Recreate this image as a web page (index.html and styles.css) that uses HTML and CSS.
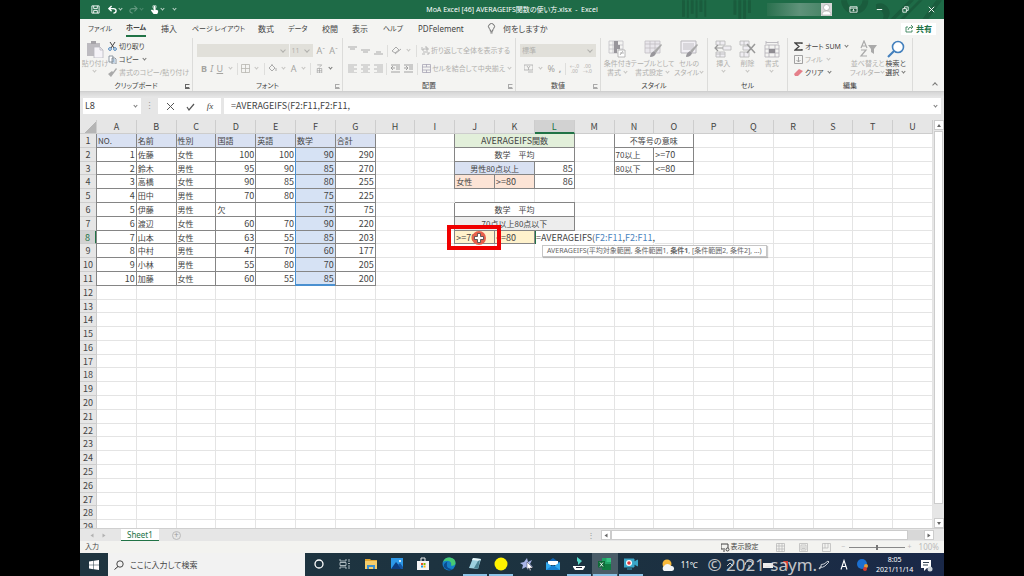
FILE: index.html
```
<!DOCTYPE html>
<html lang="ja">
<head>
    <meta charset="utf-8">
    <title>AVERAGEIFS関数の使い方.xlsx - Excel</title>
    <link rel="stylesheet" href="styles.css">
</head>
<body>
    <div class="window">
        <!-- title bar -->
        <header class="titlebar">
            <svg class="pattern" viewBox="0 0 270 19"><g fill="#1a5c3d"><path d="M0 0h3v17H0zM5 0h2v18H5zM9 0h3v14H9zM14 0h2v18h-2zM18 0h3v12h-3zM23 0h2v17h-2zM53 0h3v15h-3zM58 0h3v19h-3zM63 0h3v19h-3zM68 0h3v13h-3zM215 19l19-19h5l-19 19zM225 19l19-19h4l-19 19zM248 19l14-19h6l-14 19z"/><path d="M164 0a14 14 0 0 0 28 0h-6a8 8 0 0 1-16 0zM200 4a10 10 0 0 1 12 15h-5a7 7 0 0 0-7-10z"/></g></svg>
            <div class="quick">
                <button aria-label="上書き保存"><svg viewBox="0 0 10 10"><path d="M1 1h8v8H1zM3 1v3h4V1M3 9V6h4v3" fill="none" stroke="#fff"/></svg></button>
                <button aria-label="元に戻す"><svg viewBox="0 0 10 10"><path d="M4 1L1 4l3 3M1 4h5q3 0 3 2.500T6 9" fill="none" stroke="#fff" stroke-width="1.500"/></svg><i class="chev"></i></button>
                <button class="dim" aria-label="やり直し"><svg viewBox="0 0 10 10"><path d="M6 1l3 3-3 3M9 4H4Q1 4 1 6.500T4 9" fill="none" stroke="#fff" stroke-width="1.200"/></svg><i class="chev"></i></button>
                <button aria-label="タッチ"><svg viewBox="0 0 10 10"><path d="M4 1q1-1 2 0v4l3 1v2L8 10H4L1 6l1-1 2 1z" fill="#fff"/><circle cx="5" cy="2" r="2" fill="none" stroke="#fff" stroke-width=".6"/></svg><i class="chev"></i></button>
                <button aria-label="カスタマイズ"><i class="chev"></i></button>
            </div>
            <h1>MoA Excel [46] AVERAGEIFS関数の使い方.xlsx&nbsp; -&nbsp; Excel</h1>
            <div class="winbtns">
                <span class="account"></span>
                <svg class="avatar" viewBox="0 0 11 13"><path fill="#d8d8d8" d="M0 0h11v13H0z"/><circle cx="5.500" cy="4.500" r="3" fill="#fff" stroke="#999" stroke-width=".6"/><path d="M1 12q0-4 4.500-4t4.500 4z" fill="#fff" stroke="#999" stroke-width=".5"/></svg>
                <button aria-label="リボンの表示"><svg viewBox="0 0 10 10"><path d="M1 2h8v6H1zM1 3.500h8M5 7V5M4 6l1-1 1 1" fill="none" stroke="#fff" stroke-width=".9"/></svg></button>
                <button aria-label="最小化"><svg viewBox="0 0 10 10"><path d="M2 5h6" stroke="#fff"/></svg></button>
                <button aria-label="元のサイズ"><svg viewBox="0 0 10 10"><path d="M2 4h4v4H2zM4 4V2h4v4H6" fill="none" stroke="#fff" stroke-width=".9"/></svg></button>
                <button aria-label="閉じる"><svg viewBox="0 0 10 10"><path d="M2 2l6 6M8 2L2 8" stroke="#fff"/></svg></button>
            </div>
        </header>

        <!-- ribbon tabs -->
        <nav class="tabs">
            <button class="kana">ファイル</button>
            <button class="kana active">ホーム</button>
            <button>挿入</button>
            <button class="kana">ページ レイアウト</button>
            <button>数式</button>
            <button class="kana">データ</button>
            <button>校閲</button>
            <button>表示</button>
            <button class="kana">ヘルプ</button>
            <button>PDFelement</button>
            <button class="tell"><svg viewBox="0 0 8 10"><path d="M3 7.500Q3 6 2 5a2.700 2.700 0 1 1 4 0Q5 6 5 7.500zM3 9h2" fill="none" stroke="#555" stroke-width=".8"/></svg>何をしますか</button>
            <button class="share"><svg viewBox="0 0 9 9"><path d="M3 3H1v5h6V6M3 6q0-3 4-3M6 1l2 2-2 2" fill="none" stroke="#217346" stroke-width=".8"/></svg>共有</button>
        </nav>

        <!-- ribbon -->
        <div class="ribbon">
            <section class="group">
                <div class="tools clipboard">
                    <button class="big off"><svg viewBox="0 0 18 18"><path d="M1 3h13v13H1z" fill="#bdbbc0"/><path d="M5 1h5v3H5z" fill="#a5a3a8"/><path d="M8 7h6l3 3v8H8z" fill="#f5f3f8" stroke="#b9b7bf" stroke-width=".8"/><path d="M14 7v3h3" fill="none" stroke="#b9b7bf" stroke-width=".8"/></svg><span>貼り付け</span><i class="chev"></i></button>
                    <div class="stack">
                        <button><svg viewBox="0 0 9 9"><path d="M2 0l4 6M7 0L3 6" stroke="#444"/><circle cx="2" cy="7" r="1.400" fill="none" stroke="#4d86bd"/><circle cx="7" cy="7" r="1.400" fill="none" stroke="#4d86bd"/></svg>切り取り</button>
                        <button><svg viewBox="0 0 9 9"><path d="M1 1h4v6H1zM4 3h3l1 1v5H4z" fill="#fff" stroke="#74808e" stroke-width=".8"/><path d="M5 5h2M5 7h2" stroke="#4d86bd" stroke-width=".7"/></svg>コピー <i class="chev"></i></button>
                        <button class="off"><svg viewBox="0 0 9 9"><path d="M0 6l4-3 2 2-3 4zM5 4l3-4 1 1-3 4z" fill="#aaa"/></svg>書式のコピー/貼り付け</button>
                    </div>
                </div>
                <h2>クリップボード</h2><i class="launch dark"></i>
            </section>

            <section class="group">
                <div class="rows">
                    <div class="line fonts">
                        <label class="pick"><select aria-label="フォント" disabled><option></option></select></label>
                        <label class="pick size"><select aria-label="サイズ" disabled><option>11</option></select></label>
                        <button class="letter">A<sup>ˆ</sup></button><button class="letter">A<sup>ˇ</sup></button>
                    </div>
                    <div class="line spread">
                        <button class="letter"><b>B</b></button><button class="letter"><em>I</em></button><button class="letter"><u>U</u></button><i class="chev"></i>
                        <i class="bar"></i>
                        <button aria-label="罫線"><svg viewBox="0 0 9 9"><path d="M.5.5h8v8h-8zM4.500 0v9M0 4.500h9" fill="none" stroke="#b8b6b0" stroke-width=".8"/></svg></button><i class="chev"></i>
                        <i class="bar"></i>
                        <button aria-label="塗りつぶし"><svg viewBox="0 0 9 9"><path d="M1 4l3-3 3 3-3 3zM4 1V0M8 4v3" fill="none" stroke="#aaa"/></svg></button><i class="chev"></i>
                        <button class="letter">A</button><i class="chev"></i>
                        <i class="bar"></i>
                        <button aria-label="ふりがな"><svg viewBox="0 0 9 10"><path d="M2 1h5L4 4M2 5h5v5H2zM2 7.500h5M4.500 5v5" fill="none" stroke="#999" stroke-width=".7"/></svg></button><i class="chev dark"></i>
                    </div>
                </div>
                <h2>フォント</h2><i class="launch"></i>
            </section>

            <section class="group">
                <div class="rows">
                    <div class="line align">
                        <button aria-label="上揃え"><svg viewBox="0 0 9 9"><path d="M0 1h9M2 3h5" stroke="#aaa"/></svg></button>
                        <button aria-label="上下中央"><svg viewBox="0 0 9 9"><path d="M0 4h9M2 6h5" stroke="#aaa"/></svg></button>
                        <button aria-label="下揃え"><svg viewBox="0 0 9 9"><path d="M2 6h5M0 8h9" stroke="#aaa"/></svg></button>
                        <i class="bar"></i>
                        <button aria-label="方向"><svg viewBox="0 0 9 9"><path d="M0 5l4-4 3 3-4 3zM3 8l6-5" fill="none" stroke="#aaa"/></svg></button><i class="chev"></i>
                        <i class="bar"></i>
                        <button class="off"><svg viewBox="0 0 9 9"><path d="M1 1v3h2V2M5 0v4h2V2H5M2 6h5M1 8h3M6 8h2V6" fill="none" stroke="#aaa" stroke-width=".8"/></svg>折り返して全体を表示する</button>
                    </div>
                    <div class="line align">
                        <button aria-label="左揃え"><svg viewBox="0 0 9 9"><path d="M0 1h9M0 3h6M0 5h9M0 7h6M0 9h9" stroke="#aaa" stroke-width=".8"/></svg></button>
                        <button aria-label="中央揃え"><svg viewBox="0 0 9 9"><path d="M0 1h9M2 3h5M0 5h9M2 7h5M0 9h9" stroke="#aaa" stroke-width=".8"/></svg></button>
                        <button aria-label="右揃え"><svg viewBox="0 0 9 9"><path d="M0 1h9M3 3h6M0 5h9M3 7h6M0 9h9" stroke="#aaa" stroke-width=".8"/></svg></button>
                        <i class="bar"></i>
                        <button aria-label="インデントを減らす"><svg viewBox="0 0 9 9"><path d="M0 1h9M5 3h4M5 5h4M0 8h9M4 4H0M2 2L0 4l2 2" fill="none" stroke="#999" stroke-width=".9"/></svg></button>
                        <button aria-label="インデントを増やす"><svg viewBox="0 0 9 9"><path d="M0 1h9M5 3h4M5 5h4M0 8h9M0 4h4M2 2l2 2-2 2" fill="none" stroke="#999" stroke-width=".9"/></svg></button>
                        <i class="bar"></i>
                        <button class="off"><svg viewBox="0 0 9 9"><path d="M.5.5h8v8h-8zM0 3h9M0 6h9M4.500 0v3M4.500 6v3" fill="none" stroke="#a9a7b6" stroke-width=".8"/></svg>セルを結合して中央揃え <i class="chev"></i></button>
                    </div>
                </div>
                <h2>配置</h2><i class="launch"></i>
            </section>

            <section class="group">
                <div class="rows">
                    <div class="line">
                        <label class="pick"><select aria-label="表示形式" disabled><option>標準</option></select></label>
                    </div>
                    <div class="line spread">
                        <button aria-label="通貨"><svg viewBox="0 0 9 9"><path d="M0 1h9v5H0zM3 2l1.500 2L6 2M4.500 4v2M4 8h5" fill="none" stroke="#aaa" stroke-width=".8"/></svg></button><i class="chev"></i>
                        <button class="letter">%</button><button class="letter"><b>,</b></button>
                        <i class="bar"></i>
                        <button class="dec">←.0<br>.00</button><button class="dec">.00<br>→.0</button>
                    </div>
                </div>
                <h2>数値</h2><i class="launch"></i>
            </section>

            <section class="group">
                <div class="tools spaced off">
                    <button class="big"><svg viewBox="0 0 18 18"><path d="M1 1h14v12H1zM1 5h14M1 9h14M5 1v12" fill="none" stroke="#c3c1c6" stroke-width=".8"/><path d="M6 1h4v4H6zM6 5h6v4H6zM6 9h3v4H6z" fill="#98969b"/><path d="M10 10h7v7h-7z" fill="#fff" stroke="#aaa" stroke-width=".8"/><path d="M12 15l3-4M12 13h4" stroke="#999" stroke-width=".7"/></svg><span>条件付き<br>書式 <i class="chev"></i></span></button>
                    <button class="big"><svg viewBox="0 0 18 18"><path d="M1 1h15v12H1zM1 4h15M1 8h15M6 1v12M11 1v12" fill="#e9e7ec" stroke="#c0bec3" stroke-width=".8"/><path d="M17 4l1 1-6 8-2-2z" fill="#aaa"/><path d="M6 17q0-4 4-6l2 2q-1 4-6 4z" fill="#98969b"/></svg><span>テーブルとして<br>書式設定 <i class="chev"></i></span></button>
                    <button class="big"><svg viewBox="0 0 18 18"><path d="M1 1h15v12H1z" fill="#f2f0f5" stroke="#b9b7bc"/><path d="M3 3h11v7H3z" fill="#d9d7dc"/><path d="M17 4l1 1-6 8-2-2z" fill="#aaa"/><path d="M6 17q0-4 4-6l2 2q-1 4-6 4z" fill="#98969b"/></svg><span>セルの<br>スタイル<i class="chev"></i></span></button>
                </div>
                <h2>スタイル</h2>
            </section>

            <section class="group">
                <div class="tools thirds off">
                    <button class="big"><svg viewBox="0 0 18 18"><path d="M2 1h9v4H2zM2 12h9v5H2zM6 1v4M6 12v5M2 14h9M9 6h8v4H9z" fill="#efedf2" stroke="#bbb" stroke-width=".9"/><path d="M9 8H1M4 5L1 8l3 3" fill="none" stroke="#999" stroke-width="1.200"/></svg><span>挿入</span><i class="chev"></i></button>
                    <button class="big"><svg viewBox="0 0 18 18"><path d="M2 1h9v4H2zM2 12h9v5H2zM6 1v4M6 12v5M5 6h7v4H5z" fill="#efedf2" stroke="#bbb" stroke-width=".9"/><path d="M9 4l8 9M17 4l-8 9" stroke="#999" stroke-width="1.500"/></svg><span>削除</span><i class="chev"></i></button>
                    <button class="big"><svg viewBox="0 0 18 18"><path d="M2 5h14v12H2zM2 9h14M2 13h14M6 5v12M12 5v12M3 1v3M15 1v3M3 2.500h12" fill="none" stroke="#b8b6bb" stroke-width=".9"/><path d="M6 9h6v4H6z" fill="#8f8d92"/></svg><span>書式</span><i class="chev"></i></button>
                </div>
                <h2>セル</h2>
            </section>

            <section class="group">
                <div class="tools spaced edit">
                    <div class="stack">
                        <button><svg viewBox="0 0 9 9"><path d="M8 2V1H1l4 3.500L1 8h7V7" fill="none" stroke="#444" stroke-width="1.300"/></svg>オート SUM <i class="chev"></i></button>
                        <button class="off"><svg viewBox="0 0 9 9"><path d="M.5.5h8v8h-8zM4.500 2v5M2.500 5l2 2 2-2" fill="none" stroke="#999" stroke-width=".9"/></svg>フィル <i class="chev"></i></button>
                        <button><svg viewBox="0 0 9 9"><path d="M0 6l5-5 4 2-5 5H1z" fill="#e5808a"/></svg>クリア <i class="chev"></i></button>
                    </div>
                    <button class="big off"><svg viewBox="0 0 18 18"><path d="M2 8l3-7 3 7M3 6h4M2 10h5l-5 6h6" fill="none" stroke="#aaa" stroke-width="1.200"/><path d="M9 5h9l-3 4v5l-3-2V9z" fill="#aaa"/></svg><span>並べ替えと<br>フィルター<i class="chev"></i></span></button>
                    <button class="big"><svg viewBox="0 0 18 18"><circle cx="11" cy="7" r="5.500" fill="#fff" stroke="#4480bd" stroke-width="1.600"/><path d="M7 11l-6 6" stroke="#4480bd" stroke-width="2.200"/></svg><span>検索と<br>選択 <i class="chev"></i></span></button>
                </div>
                <h2>編集</h2>
            </section>
            <button class="collapse" aria-label="リボンを折りたたむ"><i class="chev up"></i></button>
        </div>

        <!-- formula bar -->
        <div class="formulabar">
            <label class="namebox"><input type="text" value="L8" aria-label="名前ボックス"><i class="chev"></i></label>
            <span class="dots">⋮</span>
            <div class="fxbtns">
                <button aria-label="キャンセル"><svg viewBox="0 0 9 9"><path d="M1 1l7 7M8 1L1 8" stroke="#555"/></svg></button>
                <button aria-label="入力"><svg viewBox="0 0 9 9"><path d="M1 5l2 3 5-6" fill="none" stroke="#555" stroke-width="1.200"/></svg></button>
                <button class="fx">fx</button>
            </div>
            <label class="formula"><input type="text" value="=AVERAGEIFS(F2:F11,F2:F11," aria-label="数式"><i class="chev"></i></label>
        </div>

        <!-- sheet -->
        <main class="sheetarea">
            <div class="clip"><table class="sheet" id="sheet"></table></div>
            <div class="vscroll"><button aria-label="上へ"><i class="tri up"></i></button><span class="thumb"></span><button aria-label="下へ"><i class="tri"></i></button></div>
        </main>

        <div class="sheettabs">
            <span class="navs"><i class="tri left"></i><i class="tri right"></i></span>
            <button class="tab">Sheet1</button>
            <button class="add" aria-label="新しいシート">+</button>
            <span class="dots">⋮</span>
            <div class="hscroll"><button aria-label="左へ"><i class="tri left"></i></button><span class="thumb"></span><button aria-label="右へ"><i class="tri right"></i></button></div>
        </div>

        <div class="status">
            <span class="mode">入力</span>
            <button><svg viewBox="0 0 9 9"><path d="M7 5V1H0v5h4M2 8h2" fill="none" stroke="#444"/><circle cx="6.500" cy="6.500" r="1.500" fill="none" stroke="#444"/></svg>表示設定</button>
            <div class="views">
                <svg viewBox="0 0 9 9"><path d="M.5.5h8v8h-8zM0 3h9M0 6h9M3 0v9M6 0v9" fill="none" stroke="#bbb" stroke-width=".8"/></svg>
                <svg viewBox="0 0 9 9"><path d="M.5.5h8v8h-8zM2 2h5v5H2zM3 4h3M3 5.500h3" fill="none" stroke="#bbb" stroke-width=".8"/></svg>
                <svg viewBox="0 0 9 9"><path d="M.5.5h8v8h-8zM3 0v5h3V0M0 5h3" fill="none" stroke="#bbb" stroke-width=".8"/></svg>
            </div>
            <div class="zoom"><span>−</span><input type="range" min="0" max="100" value="50" aria-label="ズーム"><span>+</span></div>
            <span class="pct">100%</span>
        </div>

        <!-- taskbar -->
        <footer class="taskbar">
            <button class="start" aria-label="スタート"><svg viewBox="0 0 10 10"><path d="M0 1.500l4.500-.7v4H0zM5 .7L10 0v4.800H5zM0 5.300h4.500v4L0 8.600zM5 5.300h5V10l-5-.7z" fill="#fff"/></svg></button>
            <label class="search"><svg viewBox="0 0 10 10"><circle cx="6" cy="4" r="3.200" fill="none" stroke="#333" stroke-width=".9"/><path d="M4 6.500L.5 9.500" stroke="#333"/></svg><input type="text" placeholder="ここに入力して検索" aria-label="検索"></label>
            <div class="apps">
                <button aria-label="Cortana"><svg viewBox="0 0 14 14"><circle cx="7" cy="7" r="4" fill="none" stroke="#fff" stroke-width="1.300"/></svg></button>
                <button aria-label="タスクビュー"><svg viewBox="0 0 14 14"><path d="M2 2v2h6V2M2 12v-2h6v2M2 5.500h6v3H2zM11 2v3M11 8v4M10 6.500h2" fill="none" stroke="#b9c4c9" stroke-width=".9"/></svg></button>
                <button aria-label="エクスプローラー"><svg viewBox="0 0 14 14"><path d="M1 2h5l1 1h6v3H1z" fill="#e3a52f"/><path d="M1 4h12v8H1z" fill="#f7cd6b"/><path d="M3 8h8v4H9v-2H5v2H3z" fill="#3e8fce"/></svg></button>
                <button aria-label="フォト"><svg viewBox="0 0 14 14"><path d="M1 1h12v11H1z" fill="#2d98e8"/><path d="M1 12l5-7 6 7z" fill="#0d3d80"/><path d="M8 8l2-2 3 4v2h-2z" fill="#1556a3"/><circle cx="10" cy="4" r="1" fill="#fff"/></svg></button>
                <button aria-label="ストア"><svg viewBox="0 0 14 14"><path d="M5 4V1h4v3" fill="none" stroke="#eee"/><path d="M1 4h12v9H1z" fill="#f5f5f5"/><path d="M5 6h2v2H5z" fill="#e65126"/><path d="M7.500 6h2v2h-2z" fill="#7fba00"/><path d="M5 8.500h2v2H5z" fill="#199ee0"/><path d="M7.500 8.500h2v2h-2z" fill="#fdb900"/></svg></button>
                <button aria-label="Edge"><svg viewBox="0 0 14 14"><circle cx="7" cy="7" r="6.500" fill="#167fc6"/><path d="M1 5Q3 0 8 .6q6 1 5.500 6.400Q12 9.500 9 8.500 10 5 7 4 4 3 1 5z" fill="#47c974"/><path d="M5 7q-1 5 6 5-5 3-9-2Q1 6 6 4.500 4.500 5.500 5 7z" fill="#0c4c91"/></svg></button>
                <button class="open" aria-label="メモ帳"><svg viewBox="0 0 14 14"><path d="M5 1l8 1-3 10-9-1z" fill="#9cd0df"/><path d="M5 1l8 1-1 2-8-1z" fill="#e8f5f8"/><path d="M10 4l2-1-2 9-4-1z" fill="#4b8394"/></svg></button>
                <button class="open" aria-label="録画"><svg viewBox="0 0 14 14"><circle cx="7" cy="7" r="6.500" fill="#fff200"/></svg></button>
                <button aria-label="ツール"><svg viewBox="0 0 14 14"><path d="M7 1l1 4 4-2-2 4 3 3-4-1-1 4-2-3-4 2 1-4-3-2 4-1z" fill="#a9b5e8"/><path d="M7 5l6 6-3 0 1 2-1 1-1-3-2 1z" fill="#fff" stroke="#223" stroke-width=".4"/></svg></button>
                <button aria-label="メール"><svg viewBox="0 0 14 14"><path d="M0 6l7-5 7 5z" fill="#1065b5"/><path d="M2 4h10v4H2z" fill="#fff"/><path d="M0 5l7 5 7-5v8H0z" fill="#31a9ee"/><path d="M0 13l7-5 7 5z" fill="#1682d4"/></svg></button>
                <button class="open" aria-label="Filmora"><svg viewBox="0 0 14 14"><path d="M5 0l5 4-4 4V5L5 4z" fill="#58dac9"/><path d="M1 9h12v1l-2 3H3l-2-3z" fill="#fff"/><path d="M4 10.500h6" stroke="#223"/></svg></button>
                <button class="open current" aria-label="Excel"><svg viewBox="0 0 14 14"><path d="M4 1h9v12H4z" fill="#21a366"/><path d="M4 7h9v6H4z" fill="#107c41"/><path d="M8.500 1H13v4H8.500z" fill="#33c481"/><path d="M0 4h7v6.500H0z" fill="#0f6b38"/><path d="M2 5.500l3 4M5 5.500l-3 4" stroke="#fff" stroke-width=".9"/></svg></button>
                <button class="open" aria-label="カメラ"><svg viewBox="0 0 14 14"><path d="M0 2h10v8H0zM10 5l4-2v6l-4-2zM3 12h5" fill="#3aa6c8" stroke="#3aa6c8"/><circle cx="5" cy="6" r="3" fill="#fff"/><circle cx="5" cy="6" r="1.800" fill="#e0363a"/></svg></button>
            </div>
            <div class="tray">
                <svg viewBox="0 0 14 14"><circle cx="6" cy="6" r="4.500" fill="#f8b93b"/><path d="M3 13a3 3 0 0 1 0-5 4 4 0 0 1 7 0 2.500 2.500 0 0 1 1 5z" fill="#f1f4f7"/></svg>
                <span class="temp">11℃</span>
                <div class="hidden-icons">
                    <svg viewBox="0 0 14 14"><path d="M4 8l3-3 3 3" fill="none" stroke="#ccc"/></svg>
                    <svg viewBox="0 0 14 14"><path d="M3 7a4 4 0 0 1 8 0M7 7v4" fill="none" stroke="#ccc"/></svg>
                    <svg viewBox="0 0 14 14"><path d="M2 5h10v5H2z" fill="#eee"/></svg>
                    <svg viewBox="0 0 14 14"><path d="M3 3h5v9z" fill="#d23a30"/></svg>
                    <span class="watermark">© 2021-saym.</span>
                </div>
                <svg viewBox="0 0 14 14"><path d="M2 11q3-1 2-3t3-2l4-3 1 1-4 4q-3 2-4 1t-2 2" fill="none" stroke="#d8dde2" stroke-width=".9"/></svg>
                <svg viewBox="0 0 14 14"><path d="M4 11.500l3-9 3 9M5 8.500h4" fill="none" stroke="#fff" stroke-width="1.100"/></svg>
                <svg viewBox="0 0 14 14"><circle cx="6" cy="6" r="5" fill="#1b6fd0"/><circle cx="10" cy="8" r="2" fill="#e39a36"/><circle cx="9" cy="11" r="2" fill="#d23a30"/></svg>
                <time>8:05<br>2021/11/14</time>
                <svg viewBox="0 0 14 14"><path d="M2 2h10v8H8l-3 3v-3H2z" fill="#fff"/><path d="M4 4.500h6M4 7h5" stroke="#1c2f40" stroke-width=".9"/><circle cx="11" cy="11" r="2.500" fill="#ccd3d9"/></svg>
            </div>
        </footer>
    </div>

    <script>
        const letters = 'ABCDEFGHIJKLMNOPQRSTU'.split('');
        const ROWS = 29;

        const scores = [
            ['NO.', '名前', '性別', '国語', '英語', '数学', '合計'],
            [1, '佐藤', '女性', 100, 100, 90, 290],
            [2, '鈴木', '男性', 95, 90, 85, 270],
            [3, '高橋', '女性', 90, 85, 80, 255],
            [4, '田中', '男性', 70, 80, 75, 225],
            [5, '伊藤', '男性', '欠', '', 75, 75],
            [6, '渡辺', '女性', 60, 70, 90, 220],
            [7, '山本', '女性', 63, 55, 85, 203],
            [8, '中村', '男性', 47, 70, 60, 177],
            [9, '小林', '男性', 55, 80, 70, 205],
            [10, '加藤', '女性', 60, 55, 85, 200]
        ];

        // address: [content, classes, colspan]
        const cells = {
            J1: ['<span class="latin">AVERAGEIFS</span>関数', 'box green mid', 3],
            J2: ['数学　平均', 'box mid', 3],
            J3: ['男性80点以上', 'box blue mid', 2],
            L3: [85, 'box'],
            J4: ['女性', 'box orange'],
            K4: ['&gt;=80', 'box orange latin'],
            L4: [86, 'box'],
            J6: ['数学　平均', 'box top mid', 3],
            J7: ['70点以上80点以下', 'box gray mid', 3],
            J8: ['&gt;=70<span class="marker"></span><svg class="pointer" viewBox="0 0 16 16"><circle cx="8" cy="8" r="7" fill="#e8604c"/><path d="M6.500 3.500h3v3h3v3h-3v3h-3v-3h-3v-3h3z" fill="#fff" stroke="#444" stroke-width=".8"/></svg>', 'box yellow latin anchor'],
            K8: ['&lt;=80', 'box yellow latin'],
            L8: ['<span class="typing">=AVERAGEIFS(<i>F2:F11</i>,<i>F2:F11</i>,</span><span class="hint">AVERAGEIFS(平均対象範囲, 条件範囲1, <b>条件1</b>, [条件範囲2, 条件2], ...)</span>', 'editing latin anchor'],
            N1: ['不等号の意味', 'box mid', 2],
            N2: ['70以上', 'box'],
            O2: ['&gt;=70', 'box latin'],
            N3: ['80以下', 'box'],
            O3: ['&lt;=80', 'box latin']
        };

        scores.forEach((row, r) => {
            row.forEach((value, c) => {
                let cls = 'box';
                if (r === 0) cls += ' blue';
                if (c === 5 && r > 0) cls += ' picked';
                if (c === 5 && r === 10) cls += ' last';
                cells[letters[c] + (r + 1)] = [value, cls];
            });
        });

        let html = '<thead><tr><th class="corner"></th>';
        letters.forEach(l => {
            html += '<th class="' + (l === 'L' ? 'on' : '') + '">' + l + '</th>';
        });
        html += '</tr></thead><tbody>';
        for (let r = 1; r <= ROWS; r++) {
            html += '<tr><th class="' + (r === 8 ? 'on' : '') + '">' + r + '</th>';
            for (let c = 0; c < letters.length; c++) {
                const [value, cls, span] = cells[letters[c] + r] || ['', '', 1];
                const num = typeof value === 'number' ? ' num' : '';
                html += '<td class="' + cls + num + (span > 1 ? ' span' + span : '') + '"' + (span > 1 ? ' colspan="' + span + '"' : '') + '>' + value + '</td>';
                if (span > 1) c += span - 1;
            }
            html += '</tr>';
        }
        document.getElementById('sheet').innerHTML = html + '</tbody>';
    </script>
</body>
</html>
```
FILE: styles.css
```
* {
    box-sizing: border-box;
}

body {
    margin: 0;
    padding: 0 80px;
    background: #000;
    color: #444;
    font-family: "Noto Sans", "Noto Sans CJK JP", sans-serif;
    font-size: 8px;
    line-height: 10px;
    font-feature-settings: "palt";
}

button, input, select {
    font: inherit;
    font-feature-settings: inherit;
    color: inherit;
    border: 0;
    margin: 0;
    padding: 0;
    background: none;
    border-radius: 0;
    min-width: 0;
}

button {
    display: flex;
    align-items: center;
    white-space: nowrap;
}

input {
    outline: 0;
}

h1, h2 {
    margin: 0;
    font-size: 7px;
    font-weight: normal;
}

svg {
    flex: none;
    display: block;
    width: 9px;
    height: 9px;
}

.window {
    height: 100vh;
    display: flex;
    flex-direction: column;
    background: #e6e6e6;
    overflow: hidden;
}

.chev {
    display: inline-block;
    flex: none;
    width: 3px;
    height: 3px;
    margin: 0 2px 2px;
    border: solid currentColor;
    border-width: 0 1px 1px 0;
    transform: rotate(45deg);
    opacity: .7;
}

.chev.up {
    transform: rotate(225deg);
    width: 4px;
    height: 4px;
}

.chev.dark {
    color: #444;
}

.tri {
    border: 2px solid transparent;
    border-top: 3px solid #666;
    border-bottom: 0;
}

.tri.up { transform: rotate(180deg); }
.tri.left { transform: rotate(90deg); }
.tri.right { transform: rotate(270deg); }

/* title bar */
.titlebar {
    flex: none;
    height: 19px;
    display: grid;
    grid-template-columns: 1fr auto 1fr;
    align-items: center;
    background: #1e6b47;
    color: #fff;
    position: relative;
}

.titlebar > * {
    position: relative;
}

.titlebar .pattern {
    position: absolute;
    right: 0;
    top: 0;
    width: 262px;
    height: 19px;
}

.quick {
    display: flex;
    align-items: center;
    gap: 5px;
    padding-left: 11px;
}

.quick button:first-child {
    margin-right: 3px;
}

.quick .dim {
    opacity: .3;
}

.winbtns {
    display: flex;
    justify-content: flex-end;
    align-items: center;
    padding-right: 8px;
}

.winbtns button {
    margin-left: 17px;
}

.account {
    width: 54px;
    height: 13px;
    background: linear-gradient(90deg, #2a704e, #5f927a 60%, #4b8669);
}

.avatar {
    width: 11px;
    height: 13px;
}

/* tabs */
.tabs {
    flex: none;
    height: 19px;
    display: grid;
    grid-template-columns: 38px 35px 31px 66px 30px 34px 30px 31px 35px 69px 1fr auto;
    align-items: center;
    padding: 0 8px;
    background: #f4f4f2;
}

.tabs button {
    height: 16px;
    justify-self: start;
}

.tabs .kana {
    font-size: 7px;
}

.tabs .active {
    font-weight: bold;
    border-bottom: 2px solid #217346;
}

.tabs .tell {
    gap: 7px;
}

.tell svg {
    height: 11px;
}

.tabs .share {
    height: 12px;
    gap: 2px;
    padding: 0 4px;
    background: #fff;
    color: #217346;
    font-weight: bold;
}

/* ribbon */
.ribbon {
    flex: none;
    height: 54px;
    display: grid;
    grid-template-columns: 113px 150px 173px 85px 107px 80px 125px 1fr;
    background: #f4f4f2;
    border-bottom: 1px solid #cfcfcf;
}

.group {
    position: relative;
    display: flex;
    flex-direction: column;
    padding: 2px 3px 0;
    border-right: 1px solid #dcdcda;
    font-size: 7px;
    min-width: 0;
}

.group h2 {
    text-align: center;
}

.launch {
    position: absolute;
    right: 2px;
    bottom: 2px;
    width: 5px;
    height: 5px;
    border: 1px solid #aaa;
    border-right-color: transparent;
    border-bottom: 2px solid #aaa;
}

.launch.dark {
    border-color: #666 transparent #666 #666;
}

.off, .rows {
    color: #b1b0ad;
}

.tools {
    flex: 1;
    display: flex;
    gap: 3px;
}

.clipboard {
    padding-left: 2px;
}

.thirds {
    display: grid;
    grid-template-columns: repeat(3, 1fr);
    gap: 0;
}

.spaced {
    justify-content: space-between;
    gap: 0;
}

.edit {
    padding: 0 3px;
}

.big {
    flex-direction: column;
    gap: 1px;
    line-height: 9px;
    text-align: center;
}

.big svg {
    width: 18px;
    height: 18px;
}

.big .chev {
    margin: 0 1px 2px;
}

.stack {
    display: flex;
    flex-direction: column;
    justify-content: space-around;
    padding-bottom: 2px;
}

.stack button {
    gap: 2px;
}

.rows {
    flex: 1;
    display: flex;
    flex-direction: column;
    gap: 5px;
    padding: 4px 1px 0;
}

.line {
    display: flex;
    align-items: center;
    gap: 1px;
    height: 13px;
}

.spread {
    justify-content: space-between;
    padding: 0 4px;
}

.align {
    gap: 4px;
    padding-left: 1px;
}

.align .off {
    gap: 1px;
}

.letter {
    font-size: 9px;
    color: #a5a4a1;
}

.letter sup {
    font-size: 7px;
    line-height: 7px;
}

.fonts .letter {
    margin-left: 3px;
}

.bar {
    flex: none;
    width: 1px;
    height: 12px;
    background: #dededc;
}

.dec {
    font-size: 5px;
    line-height: 5px;
}

.pick {
    flex: 1;
    position: relative;
    background: #e1e0da;
}

.pick.size {
    flex: 0 0 23px;
}

.pick select {
    appearance: none;
    display: block;
    width: 100%;
    height: 13px;
    padding: 0 2px;
    opacity: 1;
}

.pick::after {
    content: "";
    position: absolute;
    right: 4px;
    top: 4px;
    width: 3px;
    height: 3px;
    border: solid #b1b0ad;
    border-width: 0 1px 1px 0;
    transform: rotate(45deg);
}

.collapse {
    align-self: end;
    justify-self: end;
    padding: 2px 5px;
}

/* formula bar */
.formulabar {
    flex: none;
    height: 28px;
    padding: 6px 3px;
    display: flex;
    background: linear-gradient(#d6d6d6, #e6e6e6 5px);
    font-size: 9px;
}

.formulabar label, .fxbtns {
    display: flex;
    align-items: center;
    background: #fff;
    padding: 0 2px;
}

.formulabar input {
    width: 100%;
}

.namebox {
    width: 58px;
}

.formulabar .dots {
    width: 17px;
    text-align: center;
    line-height: 16px;
    color: #999;
}

.formulabar .fxbtns {
    width: 63px;
    justify-content: space-around;
    margin-right: 3px;
}

.fx {
    font-family: "Liberation Serif", serif;
    font-style: italic;
    font-size: 9px;
}

.formulabar .formula {
    flex: 1;
    padding-left: 7px;
    font-family: "Noto Sans CJK JP", sans-serif;
}

/* sheet */
.sheetarea {
    flex: 1;
    min-height: 0;
    display: flex;
}

.clip {
    flex: 1;
    overflow: hidden;
    background: #fff;
}

.sheet {
    height: calc(100% + 6px);
    display: grid;
    grid-template-columns: 17px repeat(21, minmax(0, 1fr));
    grid-template-rows: 14px repeat(29, minmax(0, 1fr));
    font-family: "Noto Sans CJK JP", sans-serif;
    font-feature-settings: normal;
    line-height: 13px;
}

.sheet thead, .sheet tbody, .sheet tr {
    display: contents;
}

.sheet th {
    padding: 0;
    background: #e6e6e6;
    border-right: 1px solid #cdcdcd;
    border-bottom: 1px solid #cdcdcd;
    font-size: 9px;
    font-weight: normal;
    text-align: center;
}

.sheet .corner {
    background: linear-gradient(135deg, #e6e6e6 60%, #b5b5b5 60%);
}

.sheet .on {
    background: #d2d2d2;
    color: #217346;
}

.sheet thead .on {
    border-bottom: 2px solid #217346;
}

.sheet tbody .on {
    border-right: 2px solid #217346;
}

.sheet td {
    padding: 0 1px;
    border-right: 1px solid #e4e4e4;
    border-bottom: 1px solid #e4e4e4;
    white-space: nowrap;
    min-width: 0;
}

.sheet .box {
    border-color: #858585;
    box-shadow: -1px 0 #858585;
}

.sheet .top {
    box-shadow: -1px 0 #858585, 0 -1px #858585;
}

.sheet .num {
    font-size: 9px;
    text-align: right;
}

.sheet .latin {
    font-size: 9px;
}

.span2 { grid-column: span 2; }
.span3 { grid-column: span 3; }
.mid { text-align: center; }
.blue { background: #d9e1f2; }
.green { background: #e2efda; }
.orange { background: #fce4d6; }
.yellow { background: #fff2cc; }
.gray { background: #ededed; }

.sheet .picked {
    background: #d6e2f4;
    border-right-color: #4a90d0;
    box-shadow: -1px 0 #4a90d0;
}

.sheet .last {
    border-bottom: 2px solid #4a90d0;
}

.anchor {
    position: relative;
}

.sheet .editing {
    border: 1px solid #217346;
    border-right: 0;
    padding: 0;
    line-height: 12px;
}

.typing {
    position: relative;
    background: #fff;
}

.typing i {
    font-style: normal;
    color: #4a83bd;
}

.hint {
    position: absolute;
    left: 6px;
    top: 13px;
    padding: 0 4px;
    background: #fff;
    border: 1px solid #c6c6c6;
    box-shadow: 1px 1px 1px rgba(0, 0, 0, 0.2);
    font-family: "Noto Sans", "Noto Sans CJK JP", sans-serif;
    font-size: 7px;
    line-height: 10px;
    color: #666;
}

.marker {
    position: absolute;
    z-index: 2;
    left: -8px;
    top: -6px;
    width: 54px;
    height: 25px;
    border: 4px solid #f00000;
}

.pointer {
    position: absolute;
    z-index: 3;
    left: 16px;
    top: -1px;
    width: 16px;
    height: 16px;
}

.vscroll {
    width: 11px;
    display: flex;
    flex-direction: column;
    padding: 0 1px;
}

.vscroll button, .hscroll button {
    flex: none;
    width: 10px;
    height: 10px;
    justify-content: center;
    background: #fff;
    border: 1px solid #ccc;
}

.vscroll .thumb {
    flex: 1;
    margin: 1px 0 14px;
    background: #fff;
    border: 1px solid #ccc;
}

/* sheet tabs */
.sheettabs {
    flex: none;
    height: 13px;
    display: flex;
    align-items: center;
    border-top: 1px solid #cfcfcf;
    padding-right: 10px;
    color: #999;
}

.navs {
    width: 41px;
    display: flex;
    gap: 8px;
    padding-left: 10px;
    opacity: .4;
}

.sheettabs .tab {
    height: 12px;
    padding: 0 6px;
    background: #fff;
    border-bottom: 1px solid #217346;
    color: #217346;
}

.sheettabs .add {
    width: 9px;
    height: 9px;
    margin-left: 13px;
    justify-content: center;
    border: 1px solid #bbb;
    border-radius: 50%;
}

.sheettabs .dots {
    margin-left: auto;
    padding-right: 6px;
}

.hscroll {
    width: 39%;
    display: flex;
    background: #d8d8d8;
}

.hscroll .thumb {
    flex: 1;
    margin-right: 16px;
    background: #fff;
    border: 1px solid #ccc;
}

/* status bar */
.status {
    flex: none;
    height: 12px;
    display: flex;
    align-items: center;
    padding: 0 5px;
    background: #f3f3f0;
    font-size: 7px;
}

.mode {
    flex: 1;
}

.status button {
    gap: 1px;
}

.views {
    display: flex;
    gap: 14px;
    margin: 0 11px 0 17px;
}

.zoom {
    display: flex;
    align-items: center;
    gap: 3px;
    color: #bbb;
}

.zoom input {
    appearance: none;
    width: 56px;
    height: 1px;
    background: #888;
}

.zoom input::-webkit-slider-thumb {
    appearance: none;
    width: 2px;
    height: 5px;
    background: #777;
}

.pct {
    margin-left: 7px;
    font-size: 8px;
    color: #bbb;
}

/* taskbar */
.taskbar {
    flex: none;
    height: 23px;
    display: flex;
    background: linear-gradient(90deg, #1f3540, #1c3240 60%, #1a2848);
    color: #fff;
}

.start {
    width: 28px;
    justify-content: center;
}

.start svg, .search svg {
    width: 10px;
    height: 10px;
}

.search {
    width: 197px;
    display: flex;
    align-items: center;
    gap: 6px;
    padding-left: 6px;
    background: #f2f2f2;
}

.search input::placeholder {
    color: #444;
}

.apps {
    display: flex;
    padding-left: 1px;
}

.apps button {
    width: 26px;
    justify-content: center;
    border-bottom: 2px solid transparent;
}

.apps svg, .tray svg {
    width: 14px;
    height: 14px;
}

.apps .open {
    border-image: linear-gradient(90deg, transparent 10%, #8cc4e8 10%, #8cc4e8 90%, transparent 90%) 2;
}

.apps .current {
    background: #4a5d68;
}

.tray {
    flex: 1;
    display: flex;
    align-items: center;
    justify-content: space-between;
    padding: 0 11px 0 17px;
}

.hidden-icons {
    position: relative;
    display: flex;
    gap: 5px;
    width: 108px;
    padding-left: 20px;
}

.watermark {
    position: absolute;
    left: 4px;
    top: -3px;
    font-size: 17px;
    line-height: 20px;
    color: rgba(225, 225, 225, 0.85);
    white-space: nowrap;
}

.tray time {
    font-size: 7px;
    text-align: center;
}
```
